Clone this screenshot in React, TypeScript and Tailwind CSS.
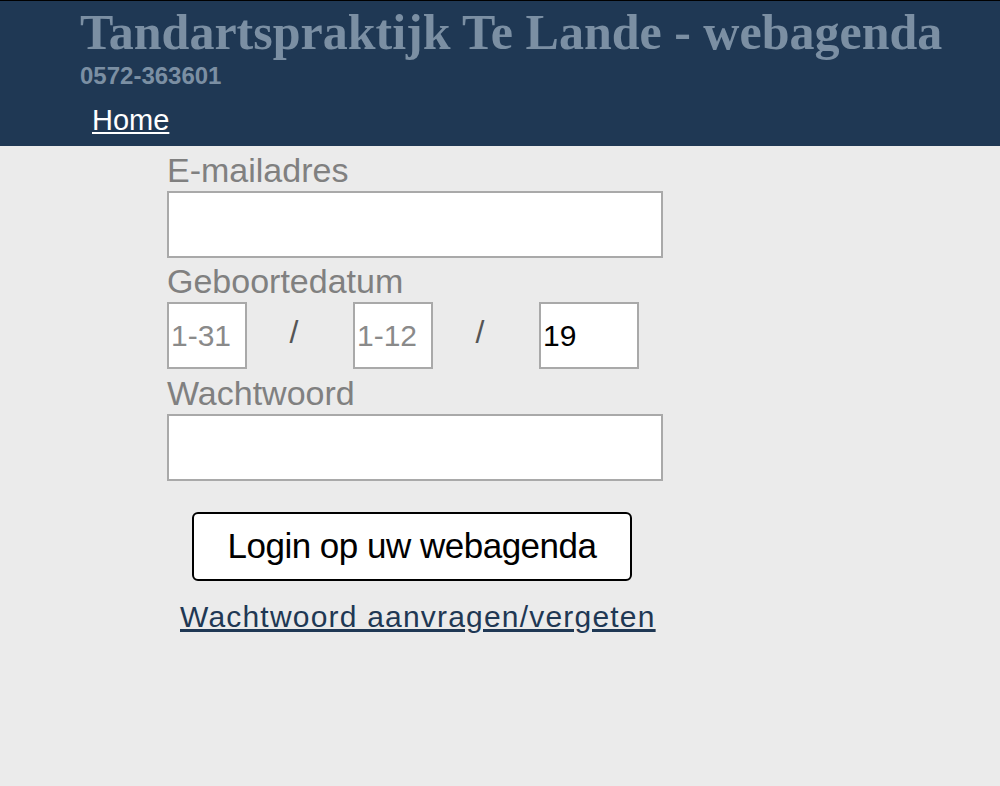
const App = () => {
  return (
    <div className="min-h-[786px] bg-[#ebebeb] font-['Liberation_Sans',Arial,sans-serif]">
      {/* Header */}
      <div className="border-t border-black bg-[#1f3854] h-[146px] pl-[80px]">
        <h1 className="font-['Liberation_Serif',serif] font-bold text-[50px] leading-[56px] pt-[3px] text-[#7b8fa3]">
          Tandartspraktijk Te Lande - webagenda
        </h1>
        <div className="mt-[2px] font-bold text-[24px] leading-[28px] text-[#7b8fa3]">0572-363601</div>
        <div className="mt-[14px] pl-[12px] text-[29px] leading-[32px]">
          <a href="#" className="text-white underline">
            Home
          </a>
        </div>
      </div>

      {/* Login form */}
      <form className="pl-[167px] pt-[5px] w-[663px]" onSubmit={(e) => e.preventDefault()}>
        <label className="block text-[34px] leading-[38px] text-[#808080]">E-mailadres</label>
        <input
          type="email"
          className="block mt-[2px] w-[496px] h-[67px] bg-white border-2 border-[#a9a9a9] outline-none"
        />

        <label className="block mt-[4px] text-[34px] leading-[38px] text-[#808080]">Geboortedatum</label>
        <div className="flex items-start mt-[2px]">
          <input
            placeholder="1-31"
            className="w-[80px] h-[67px] bg-white border-2 border-[#a9a9a9] px-[2px] text-[30px] placeholder-[#8a8a8a] outline-none"
          />
          <span className="w-[106px] text-center pt-[11px] pr-[12px] text-[32px] leading-[38px] text-[#555]">/</span>
          <input
            placeholder="1-12"
            className="w-[80px] h-[67px] bg-white border-2 border-[#a9a9a9] px-[2px] text-[30px] placeholder-[#8a8a8a] outline-none"
          />
          <span className="w-[106px] text-center pt-[11px] pr-[12px] text-[32px] leading-[38px] text-[#555]">/</span>
          <input
            defaultValue="19"
            className="w-[100px] h-[67px] bg-white border-2 border-[#a9a9a9] px-[2px] text-[30px] text-black outline-none"
          />
        </div>

        <label className="block mt-[5px] text-[34px] leading-[38px] text-[#808080]">Wachtwoord</label>
        <input
          type="password"
          className="block mt-[2px] w-[496px] h-[67px] bg-white border-2 border-[#a9a9a9] outline-none"
        />

        <button
          type="submit"
          className="block mt-[31px] ml-[25px] w-[440px] h-[69px] bg-white border-2 border-black rounded-[6px] text-[35px] tracking-[-0.5px] text-black"
        >
          Login op uw webagenda
        </button>

        <div className="mt-[19px] pl-[13px] text-[30px] leading-[34px] tracking-[1.2px]">
          <a href="#" className="text-[#1f3854] underline">
            Wachtwoord aanvragen/vergeten
          </a>
        </div>
      </form>
    </div>
  )
}

export default App
